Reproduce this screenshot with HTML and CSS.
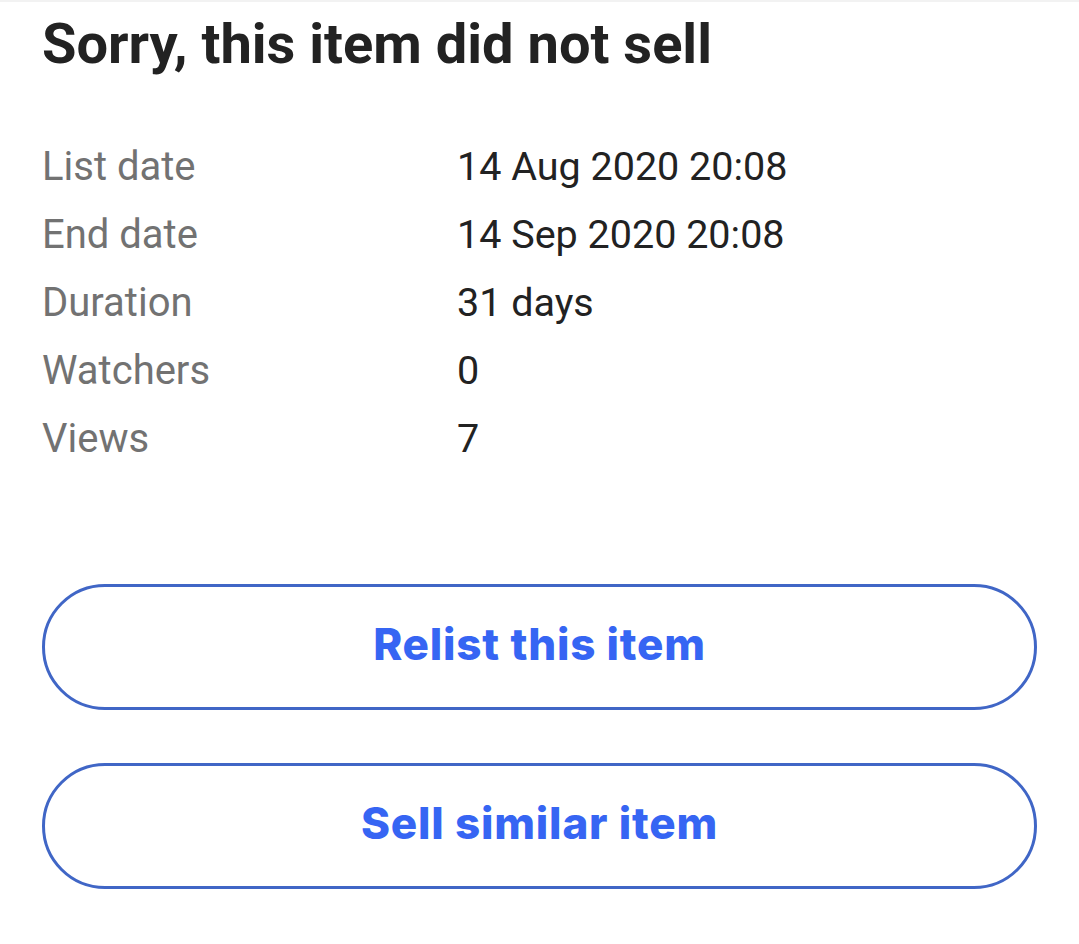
FILE: index.html
```html
<!DOCTYPE html>
<html lang="en">
    <head>
        <meta charset="UTF-8">
        <meta name="viewport" content="width=device-width, initial-scale=1.0">
        <title>Unsold item</title>
        <link rel="stylesheet" href="styles.css">
    </head>
    <body>
        <div id="app">
            <h1 class="title">Sorry, this item did not sell</h1>
            <div class="details">
                <div class="label">List date</div>
                <div class="value">14 Aug 2020 20:08</div>
                <div class="label">End date</div>
                <div class="value">14 Sep 2020 20:08</div>
                <div class="label">Duration</div>
                <div class="value">31 days</div>
                <div class="label">Watchers</div>
                <div class="value">0</div>
                <div class="label">Views</div>
                <div class="value">7</div>
            </div>
            <div class="actions">
                <button class="btn">Relist this item</button>
                <button class="btn">Sell similar item</button>
            </div>
        </div>
    </body>
</html>
```

FILE: styles.css
```css
body {
    margin: 0;
    padding: 0;
    background-color: #fff;
    font-family: Roboto, "Liberation Sans", sans-serif;
}

#app {
    padding: 0 42px 0 42px;
    border-top: 2px solid #f2f2f2;
}

.title {
    margin: 0;
    padding-top: 10px;
    font-size: 56px;
    font-weight: 700;
    color: #222;
    line-height: 64px;
}

.details {
    display: grid;
    grid-template-columns: 415px 1fr;
    margin-top: 57px;
    font-size: 40px;
    line-height: 68px;
}

.label {
    color: #727272;
}

.value {
    color: #222;
    font-size: 39.5px;
}

.actions {
    display: flex;
    flex-direction: column;
    gap: 53px;
    margin-top: 111px;
}

/* boutons */

.btn {
    height: 126px;
    width: 100%;
    padding: 0 0 6px 0;
    background: #fff;
    border: 3px solid #4066c6;
    border-radius: 63px;
    color: #3665f3;
    font-family: Inter, "Noto Sans", sans-serif;
    font-size: 44px;
    font-weight: 800;
    letter-spacing: 0.8px;
    cursor: pointer;
}
```
